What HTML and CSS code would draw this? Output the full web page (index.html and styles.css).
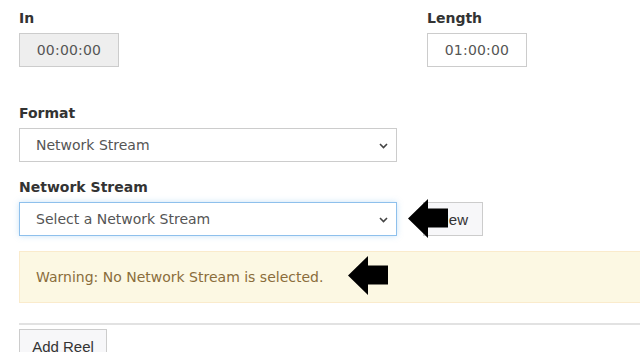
FILE: index.html
```html
<!DOCTYPE html>
<html lang="en">
<head>
    <meta charset="UTF-8">
    <meta name="viewport" content="width=device-width, initial-scale=1.0">
    <title>Reel</title>
    <link rel="stylesheet" href="styles.css">
</head>
<body>
    <div class="reel-form">
        <div class="time-row">
            <div class="field field-in">
                <label class="field-label">In</label>
                <input class="timecode" type="text" value="00:00:00" disabled>
            </div>
            <div class="field">
                <label class="field-label">Length</label>
                <input class="timecode" type="text" value="01:00:00">
            </div>
        </div>

        <div class="field field-format">
            <label class="field-label">Format</label>
            <div class="select-box">
                <span>Network Stream</span>
                <svg class="chevron" width="9" height="6" viewBox="0 0 9 6"><path d="M1 1l3.5 3.5L8 1" fill="none" stroke="#444" stroke-width="1.6"/></svg>
            </div>
        </div>

        <div class="field field-stream">
            <label class="field-label">Network Stream</label>
            <div class="stream-row">
                <div class="select-box focused">
                    <span>Select a Network Stream</span>
                    <svg class="chevron" width="9" height="6" viewBox="0 0 9 6"><path d="M1 1l3.5 3.5L8 1" fill="none" stroke="#444" stroke-width="1.6"/></svg>
                </div>
                <button class="btn btn-new" type="button">New</button>
                <svg class="arrow arrow-new" width="40" height="39" viewBox="0 0 40 39"><polygon points="0,19.5 20,0 20,9.5 40,9.5 40,28.5 20,28.5 20,39" fill="#000"/></svg>
            </div>
        </div>

        <div class="warning">
            Warning: No Network Stream is selected.
            <svg class="arrow arrow-warning" width="40" height="39" viewBox="0 0 40 39"><polygon points="0,19.5 20,0 20,9.5 40,9.5 40,28.5 20,28.5 20,39" fill="#000"/></svg>
        </div>

        <hr class="divider">

        <button class="btn btn-add" type="button">Add Reel</button>
    </div>
</body>
</html>
```

FILE: styles.css
```css
body {
    margin: 0;
    font-family: 'DejaVu Sans', Verdana, sans-serif;
    font-size: 14px;
    color: #333;
    background: #fff;
    overflow: hidden;
}

.reel-form {
    width: 760px;
    padding: 8px 0 0 19px;
}

.time-row {
    display: flex;
}

.field-in {
    width: 408px;
}

.field-label {
    display: block;
    font-weight: bold;
    line-height: 20px;
    margin-bottom: 5px;
}

.timecode {
    box-sizing: border-box;
    width: 100px;
    height: 34px;
    border: 1px solid #ccc;
    background: #fff;
    color: #555;
    font-family: inherit;
    font-size: 14px;
    letter-spacing: 0.2px;
    text-align: center;
    padding: 0;
    margin: 0;
}

.timecode:disabled {
    background: #eee;
    color: #555;
}

.field-format {
    margin-top: 36px;
}

.field-stream {
    margin-top: 15px;
}

.select-box {
    box-sizing: border-box;
    width: 378px;
    height: 34px;
    border: 1px solid #ccc;
    padding: 0 8px 0 16px;
    display: flex;
    align-items: center;
    justify-content: space-between;
    color: #555;
}

.select-box.focused {
    border-color: #8ec0ec;
    box-shadow: 0 0 6px rgba(102, 175, 233, 0.35);
}

.chevron {
    margin-top: 1px;
}

.stream-row {
    display: flex;
    align-items: center;
    gap: 26px;
    position: relative;
}

.btn {
    box-sizing: border-box;
    height: 34px;
    border: 1px solid #ccc;
    background: #f7f7f9;
    color: #333;
    font-family: 'Liberation Sans', Arial, sans-serif;
    font-size: 15px;
    padding: 0 12px;
    margin: 0;
}

.btn-new {
    width: 60px;
}

.arrow {
    position: absolute;
}

.arrow-new {
    left: 389px;
    top: -3px;
}

.warning {
    position: relative;
    box-sizing: border-box;
    margin-top: 15px;
    height: 52px;
    padding: 15px 16px;
    line-height: 20px;
    background: #fcf8e3;
    border: 1px solid #faebcc;
    color: #8a6d3b;
}

.arrow-warning {
    left: 328px;
    top: 4px;
}

.divider {
    margin: 20px 0 4px;
    border: 0;
    border-top: 2px solid #e2e2e2;
}

.btn-add {
    width: 88px;
    padding: 0;
}
```
